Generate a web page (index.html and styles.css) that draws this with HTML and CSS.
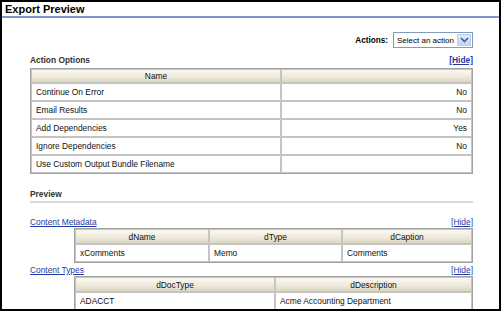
FILE: index.html
```html
<!DOCTYPE html>
<html>
<head>
<meta charset="utf-8">
<link rel="stylesheet" href="styles.css">
</head>
<body>
<div class="window">
  <div class="title">Export Preview</div>
  <div class="content">
    <div class="actions">
      <span class="actions-label">Actions:</span>
      <div class="select">
        <span class="select-text">Select an action</span>
        <span class="select-btn"><svg width="9" height="6" viewBox="0 0 9 6"><polyline points="1,1 4.5,4.5 8,1" fill="none" stroke="#4a5f8c" stroke-width="1.6"/></svg></span>
      </div>
    </div>
    <div class="section-head">
      <span class="section-title">Action Options</span>
      <a class="hide hide-bold" href="#">[Hide]</a>
    </div>
    <table class="grid options">
      <tr class="head"><th class="c-name">Name</th><th></th></tr>
      <tr class="row"><td>Continue On Error</td><td class="r">No</td></tr>
      <tr class="row"><td>Email Results</td><td class="r">No</td></tr>
      <tr class="row"><td>Add Dependencies</td><td class="r">Yes</td></tr>
      <tr class="row"><td>Ignore Dependencies</td><td class="r">No</td></tr>
      <tr class="row"><td>Use Custom Output Bundle Filename</td><td class="r"></td></tr>
    </table>
    <div class="preview-head">Preview</div>
    <div class="link-row first">
      <a class="link" href="#">Content Metadata</a>
      <a class="hide" href="#">[Hide]</a>
    </div>
    <table class="grid sub meta">
      <tr class="head"><th class="c1">dName</th><th class="c2">dType</th><th>dCaption</th></tr>
      <tr class="row"><td>xComments</td><td>Memo</td><td>Comments</td></tr>
    </table>
    <div class="link-row second">
      <a class="link" href="#">Content Types</a>
      <a class="hide" href="#">[Hide]</a>
    </div>
    <table class="grid sub types">
      <tr class="head"><th class="t1">dDocType</th><th>dDescription</th></tr>
      <tr class="row"><td>ADACCT</td><td>Acme Accounting Department</td></tr>
    </table>
  </div>
</div>
</body>
</html>
```
FILE: styles.css
```css
html, body {
  margin: 0;
  padding: 0;
  background: #fff;
}
body {
  font-family: "Liberation Sans", Arial, sans-serif;
  font-size: 8.4px;
  color: #111;
}
.window {
  width: 501px;
  height: 311px;
  box-sizing: border-box;
  border: 2px solid #000;
  overflow: hidden;
  background: #fff;
}
.title {
  height: 13px;
  line-height: 13px;
  padding: 1px 0 0 3px;
  font-size: 11px;
  font-weight: bold;
  color: #000;
  border-bottom: 2px solid #7b98c8;
}
.content {
  padding-left: 28px;
  width: 443px;
}
.actions {
  margin-top: 14px;
  height: 16px;
  display: flex;
  justify-content: flex-end;
  align-items: center;
  gap: 5px;
}
.actions-label {
  font-weight: bold;
  font-size: 8.2px;
  color: #000;
}
.select {
  width: 80px;
  height: 16px;
  box-sizing: border-box;
  border: 1px solid #7f9db9;
  display: flex;
  align-items: center;
  justify-content: space-between;
  background: #fff;
}
.select-text {
  padding-left: 3px;
  font-size: 8px;
  white-space: nowrap;
  overflow: hidden;
  color: #000;
}
.select-btn {
  flex: none;
  width: 14px;
  height: 12px;
  margin-right: 1px;
  box-sizing: border-box;
  border: 1px solid #b8cbf0;
  background: linear-gradient(#dfe9fd, #c3d4f8);
  display: flex;
  align-items: center;
  justify-content: center;
  border-radius: 1px;
}
.section-head {
  margin-top: 7px;
  height: 11px;
  line-height: 11px;
  margin-bottom: 2px;
  display: flex;
  justify-content: space-between;
}
.section-title {
  font-weight: bold;
  color: #333;
}
.hide {
  color: #1f3ca6;
  text-decoration: underline;
}
.hide-bold {
  font-weight: bold;
}
.grid {
  border-collapse: separate;
  border-spacing: 0;
  border: 1px solid #a2a2a2;
  table-layout: fixed;
}
.grid th, .grid td {
  border: 1px solid #c4c4c4;
  padding: 0 4px;
  line-height: 10px;
  white-space: nowrap;
  overflow: hidden;
}
.grid th {
  font-weight: normal;
  text-align: center;
  color: #111;
  background: linear-gradient(#f9f8f2 0%, #eeebdc 55%, #dbd7c1 100%);
}
.grid td {
  text-align: left;
  background: #fff;
}
.grid td.r {
  text-align: right;
}
.options {
  width: 443px;
}
.options .c-name {
  width: 240px;
}
.options .head {
  height: 14px;
}
.grid .row {
  height: 18px;
}
.preview-head {
  margin-top: 15px;
  line-height: 11px;
  padding-bottom: 1px;
  font-weight: bold;
  color: #333;
  border-bottom: 2px solid #d9d9d9;
}
.link-row {
  height: 11px;
  line-height: 11px;
  display: flex;
  justify-content: space-between;
}
.link-row.first {
  margin-top: 14px;
}
.link-row.second {
  margin-top: 2px;
}
.link {
  color: #1f3ca6;
  text-decoration: underline;
}
.sub {
  margin-left: 44px;
  width: 399px;
}
.sub .head {
  height: 15px;
}
.meta .c1 {
  width: 124px;
}
.meta .c2 {
  width: 123px;
}
.types .t1 {
  width: 190px;
}
```
